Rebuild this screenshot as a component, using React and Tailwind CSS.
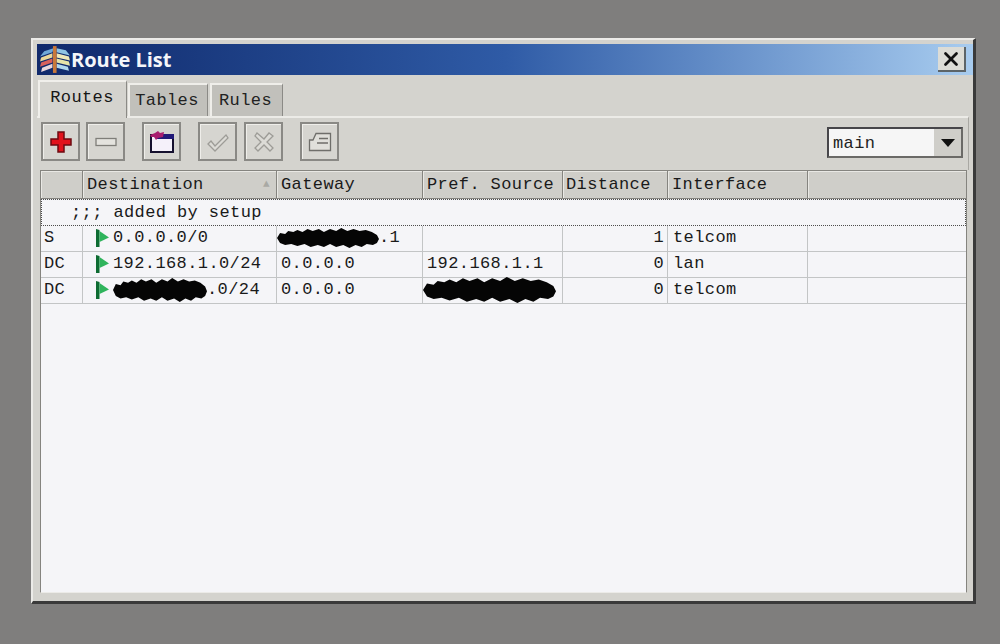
import { X } from 'lucide-react';

const GRID = 'grid grid-cols-[42px_194px_146px_140px_105px_140px_1fr]';

function WinLogo() {
  return (
    <svg width="33" height="29" viewBox="0 0 32 28" className="shrink-0">
      <path d="M15 3 L6 6 L2 11 L14 7Z" fill="#6fa8d8" />
      <path d="M14 8 L3 12 L2 16 L14 12Z" fill="#ead79a" />
      <path d="M14 13 L3 17 L2 21 L14 17Z" fill="#d8605c" />
      <path d="M14 18 L4 22 L3 26 L14 22Z" fill="#e9d6dc" />
      <path d="M18 3 L27 5 L31 10 L18 7Z" fill="#8fc4e4" />
      <path d="M18 8 L30 11 L31 15 L18 12Z" fill="#eee8b8" />
      <path d="M18 13 L30 16 L31 20 L18 17Z" fill="#e6e4a8" />
      <path d="M18 18 L29 21 L30 25 L18 22Z" fill="#b0d8ee" />
      <rect x="14.5" y="1" width="3.5" height="26" fill="#c8783a" />
    </svg>
  );
}

function Tool({ children, className = '' }) {
  return (
    <div className={`flex h-[39px] w-[39px] items-center justify-center border-2 border-[#8a8985] bg-[#d6d5d0] shadow-[inset_1px_1px_0_#efeeea] ${className}`}>
      {children}
    </div>
  );
}

function Flag() {
  return (
    <svg width="18" height="20" viewBox="0 0 18 20" className="shrink-0">
      <path d="M1 1 L4.5 2 L4.5 19 L1 19Z" fill="#0d6b32" />
      <path d="M4.5 3 L14 9.5 L4.5 14Z" fill="#2fb45c" />
    </svg>
  );
}

// scribbled-out addresses from the original screenshot
function Blob({ w, h = 20 }) {
  return (
    <svg width={w} height={h} viewBox="0 0 100 20" preserveAspectRatio="none" className="shrink-0">
      <path
        d="M0 10 L3 5 L8 6 L11 3 L16 4 L20 2 L25 4 L30 1 L35 3 L41 1 L46 4 L52 1 L58 3 L63 0 L69 3 L75 1 L81 3 L87 2 L93 4 L98 7 L100 11 L98 15 L94 17 L88 16 L83 19 L77 17 L71 20 L65 17 L58 19 L52 16 L46 19 L40 17 L33 19 L27 16 L20 18 L14 16 L8 17 L3 15 Z"
        fill="#050505"
      />
    </svg>
  );
}

function Cell({ children, className = 'pl-[3px]' }) {
  return (
    <div className={`flex h-[26px] items-center overflow-visible whitespace-nowrap border-r border-b border-[#c3c5c6] pb-[1px] ${className}`}>
      {children}
    </div>
  );
}

function Head({ children, className = 'pl-[4px]' }) {
  return (
    <div className={`flex h-[28px] items-center border-r border-b border-[#85847f] bg-[#cfcec9] shadow-[inset_1px_1px_0_#e9e8e4] ${className}`}>
      {children}
    </div>
  );
}

function Tab({ children, active, className = '' }) {
  if (active) {
    return (
      <div className={`z-10 mb-[-2px] flex h-[38px] items-center justify-center border-t-2 border-l-2 border-r border-[#f0efeb] border-r-[#8b8a86] bg-[#d4d3ce] pb-[4px] pr-[2px] text-[#161616] ${className}`}>
        {children}
      </div>
    );
  }
  return (
    <div className={`flex h-[33px] items-center justify-center border-t-2 border-l-2 border-r border-[#efeeea] border-r-[#8b8a86] bg-[#c1c0bb] pr-[3px] text-[#222] ${className}`}>
      {children}
    </div>
  );
}

export default function App() {
  return (
    <div className="h-[644px] w-[1000px] overflow-hidden bg-[#7f7e7d] pl-[31px] pt-[38px] font-['Liberation_Mono',monospace] text-[17px] tracking-[0.4px] text-[#1a1a1a]">
      <div className="flex h-[566px] w-[945px] flex-col border-t-2 border-l-2 border-r-[3px] border-b-[3px] border-t-[#ecebe8] border-l-[#ecebe8] border-r-[#3a3a3a] border-b-[#3a3a3a] bg-[#d4d3ce] pl-[4px] pt-[4px]">
        {/* title bar */}
        <div className="flex h-[31px] shrink-0 items-center justify-between bg-gradient-to-r from-[#10296b] via-[#2f5ba6] to-[#a8ccef] pl-[1px] pr-[7px]">
          <div className="flex items-center">
            <WinLogo />
            <span className="font-['Open_Sans',sans-serif] text-[20px] font-bold leading-none tracking-normal text-[#f4f6fa]">Route List</span>
          </div>
          <div className="flex h-[25px] w-[28px] items-center justify-center border-r-2 border-b-2 border-[#5c6468] bg-[#dcdcd6]">
            <X size={22} strokeWidth={3} color="#111" />
          </div>
        </div>

        <div className="mr-[4px] flex min-h-0 flex-1 flex-col">
          {/* tabs */}
          <div className="flex h-[41px] shrink-0 items-end gap-[1px] pl-[1px]">
            <Tab active className="w-[89px]">Routes</Tab>
            <Tab className="w-[80px]">Tables</Tab>
            <Tab className="ml-[1px] w-[73px]">Rules</Tab>
          </div>

          {/* toolbar */}
          <div className="flex h-[54px] shrink-0 items-start border-t-2 border-r border-[#ecebe7] border-r-[#a9a8a3] pl-[4px] pr-[5px] pt-[4px]">
            <Tool>
              <svg width="24" height="24" viewBox="0 0 24 24">
                <path d="M9 2h6v7h7v6h-7v7H9v-7H2V9h7z" fill="#e2121c" stroke="#6d0a10" strokeWidth="1.5" />
              </svg>
            </Tool>
            <Tool className="ml-[6px]">
              <svg width="24" height="12" viewBox="0 0 24 12">
                <rect x="2" y="2.5" width="20" height="7" fill="#e4e3de" stroke="#7f7e79" strokeWidth="1.3" />
              </svg>
            </Tool>
            <Tool className="ml-[17px]">
              <svg width="26" height="24" viewBox="0 0 26 24">
                <rect x="2" y="5" width="22" height="17" fill="#f5f1fa" stroke="#15102e" strokeWidth="2" />
                <rect x="8" y="4" width="17" height="5" fill="#221a78" />
                <path d="M1 5 L6 3 L9 1 L11 3 L15 2 L14 7 L9 8 L7 10 L5 7 L2 7Z" fill="#a81e6e" />
              </svg>
            </Tool>
            <Tool className="ml-[17px]">
              <svg width="26" height="24" viewBox="0 0 26 24">
                <path d="M3 14 L6 11 L10 16 L21 5 L23 8 L10 21Z" fill="#dcdbd6" stroke="#9d9c97" strokeWidth="1.3" />
              </svg>
            </Tool>
            <Tool className="ml-[7px]">
              <svg width="24" height="24" viewBox="0 0 24 24">
                <path d="M5 3 L12 9 L17 3 L21 6 L15 12 L21 18 L18 21 L12 15 L6 21 L3 18 L9 12 L3 6Z" fill="#dcdbd6" stroke="#9d9c97" strokeWidth="1.3" />
              </svg>
            </Tool>
            <Tool className="ml-[17px]">
              <svg width="24" height="20" viewBox="0 0 24 20">
                <path d="M8 1.5 H22.5 V18.5 H1.5 V8 H5 Z" fill="#e0dfda" stroke="#6f6e6a" strokeWidth="1.3" />
                <path d="M11 6.5 H20 M9 11 H20" stroke="#6f6e6a" strokeWidth="1.3" />
              </svg>
            </Tool>
            <div className="ml-auto mt-[5px] flex h-[31px] w-[136px] items-center border-2 border-[#47464a] border-b-[#6b6a67] border-r-[#6b6a67] bg-[#f6f6f6] pl-[4px]">
              <span className="flex-1 pt-[3px] text-[#222]">main</span>
              <div className="flex h-full w-[27px] items-center justify-center bg-[#cfcec9]">
                <div className="h-0 w-0 border-x-[7px] border-t-[8px] border-x-transparent border-t-[#111]" />
              </div>
            </div>
          </div>

          {/* route table */}
          <div className="ml-[3px] mr-[2px] flex min-h-0 flex-1 flex-col border-t border-l border-r border-b border-[#85847f] border-b-[#ecebe8] bg-[#f5f5f8]">
            <div className={GRID}>
              <Head />
              <Head className="relative pl-[4px]">
                Destination
                <span className="absolute right-[6px] top-[8px] text-[11px] leading-none text-[#a9a9a4]">▲</span>
              </Head>
              <Head>Gateway</Head>
              <Head>Pref. Source</Head>
              <Head className="pl-[3px]">Distance</Head>
              <Head>Interface</Head>
              <Head className="border-r-0" />
            </div>
            <div className="flex h-[27px] items-center border border-dotted border-[#4c4c4c] pl-[29px]">;;; added by setup</div>
            <div className={GRID}>
              <Cell>S</Cell>
              <Cell className="pl-[12px]"><Flag /><span>0.0.0.0/0</span></Cell>
              <Cell className="pl-0"><Blob w={102} /><span>.1</span></Cell>
              <Cell />
              <Cell className="justify-end pr-[3px]">1</Cell>
              <Cell className="pl-[5px]">telcom</Cell>
              <Cell className="border-r-0" />

              <Cell>DC</Cell>
              <Cell className="pl-[12px]"><Flag /><span>192.168.1.0/24</span></Cell>
              <Cell className="pl-[4px]">0.0.0.0</Cell>
              <Cell className="pl-[4px]">192.168.1.1</Cell>
              <Cell className="justify-end pr-[3px]">0</Cell>
              <Cell className="pl-[5px]">lan</Cell>
              <Cell className="border-r-0" />

              <Cell>DC</Cell>
              <Cell className="pl-[12px]"><Flag /><Blob w={94} h={24} /><span>.0/24</span></Cell>
              <Cell className="pl-[4px]">0.0.0.0</Cell>
              <Cell className="pl-0"><Blob w={133} h={26} /></Cell>
              <Cell className="justify-end pr-[3px]">0</Cell>
              <Cell className="pl-[5px]">telcom</Cell>
              <Cell className="border-r-0" />
            </div>
          </div>
          <div className="h-[8px] shrink-0" />
        </div>
      </div>
    </div>
  );
}
